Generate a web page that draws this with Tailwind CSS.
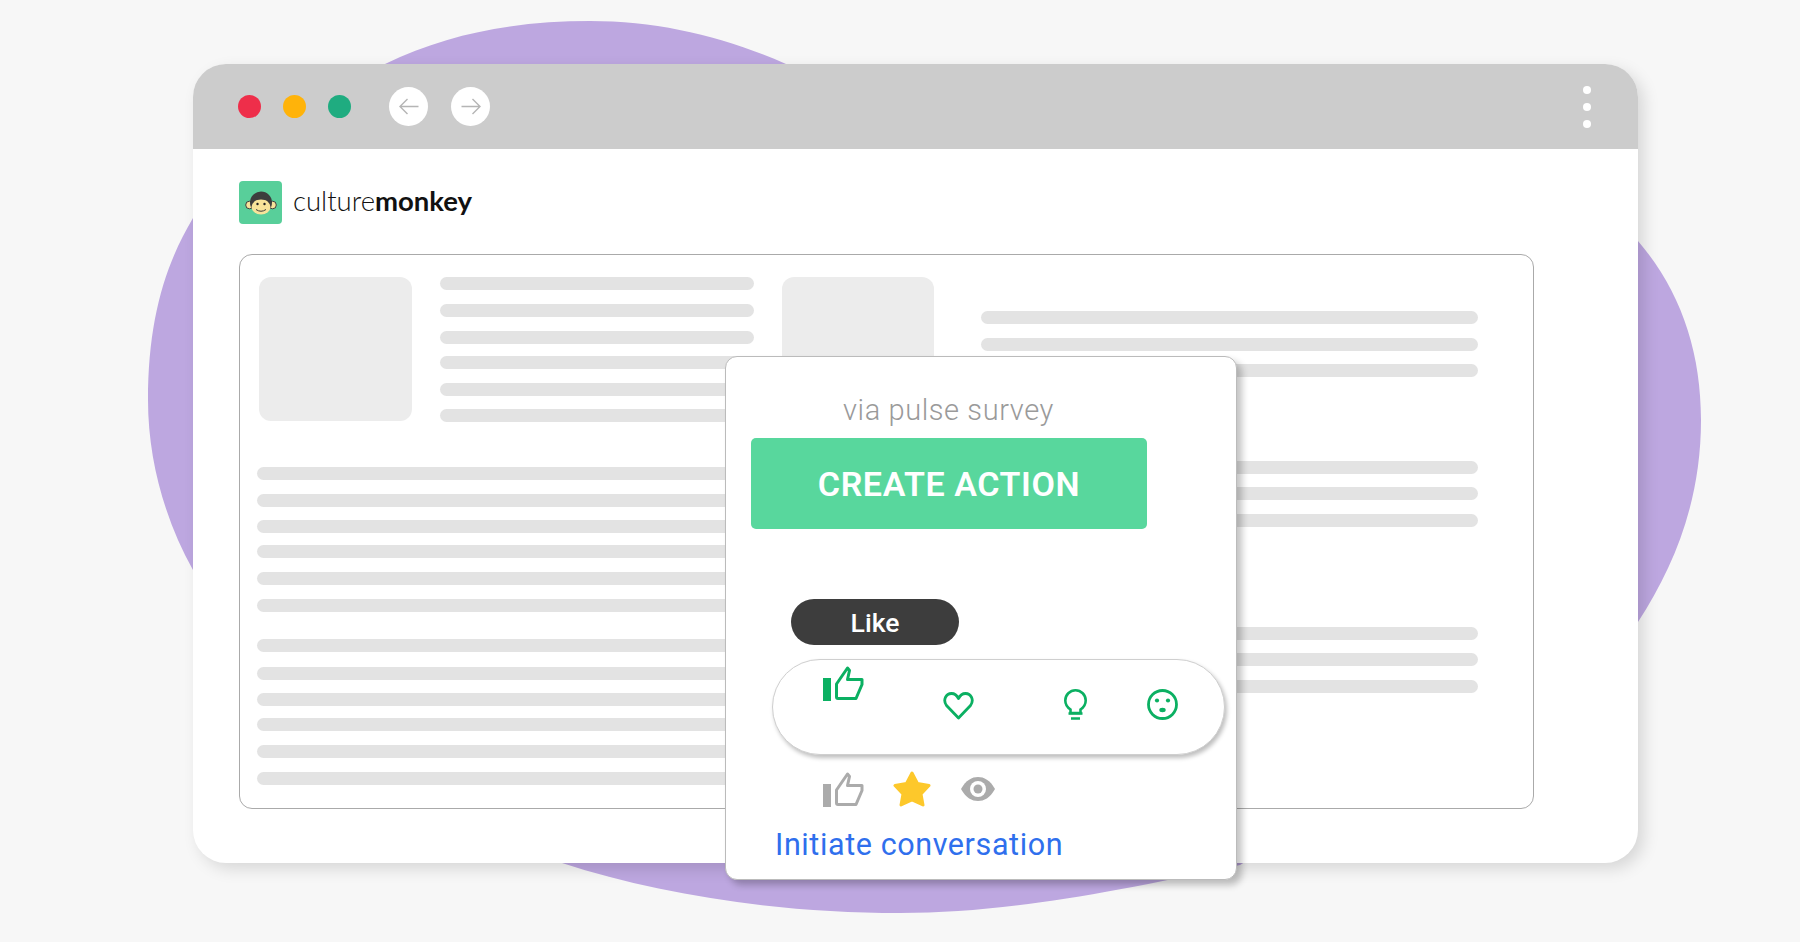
<!DOCTYPE html>
<html lang="en">
<head>
    <meta charset="UTF-8">
    <meta name="viewport" content="width=device-width, initial-scale=1.0">
    <title>CultureMonkey</title>
    <script src="https://cdn.jsdelivr.net/npm/@tailwindcss/browser@4"></script>
</head>
<body class="bg-[#f7f7f7] overflow-hidden">
    <div class="relative w-[1800px] h-[942px] pl-[193px] pt-[64px]">
        <!-- purple blob behind the window -->
        <svg class="absolute left-0 top-0" width="1800" height="942" viewBox="0 0 1800 942">
            <path fill="#bda7e0" d="M148 400 C148 320 165 265 193 218 C240 140 310 100 385 64 C450 32 520 21 590 21 C660 21 725 37 786 64 L1638 241 C1680 290 1701 350 1701 420 C1701 500 1675 565 1638 622 L1240 865 C1100 895 1000 913 900 913 C780 913 660 895 562 863 L193 570 C165 520 148 460 148 400 Z"/>
        </svg>

        <!-- browser window -->
        <div class="relative w-[1445px] h-[799px] bg-white rounded-[33px] shadow-[6px_6px_16px_rgba(0,0,0,0.13)]">
            <div class="h-[85px] bg-[#cccccc] rounded-t-[33px] flex items-center pl-[45px] pr-[47px]">
                <span class="w-[23px] h-[23px] rounded-full bg-[#ee2e4a]"></span>
                <span class="w-[23px] h-[23px] rounded-full bg-[#ffb30a] ml-[22px]"></span>
                <span class="w-[23px] h-[23px] rounded-full bg-[#1fac80] ml-[22px]"></span>
                <span class="w-[39px] h-[39px] rounded-full bg-white ml-[38px] flex items-center justify-center">
                    <svg width="20" height="17" viewBox="0 0 20 17" fill="none" stroke="#b5b5b5" stroke-width="1.4"><path d="M19.5 8.5 H1 M8.5 1 L1 8.5 L8.5 16"/></svg>
                </span>
                <span class="w-[39px] h-[39px] rounded-full bg-white ml-[23px] flex items-center justify-center">
                    <svg width="20" height="17" viewBox="0 0 20 17" fill="none" stroke="#b5b5b5" stroke-width="1.4"><path d="M0.5 8.5 H19 M11.5 1 L19 8.5 L11.5 16"/></svg>
                </span>
                <div class="ml-auto flex flex-col gap-[9px]">
                    <span class="w-[8px] h-[8px] rounded-full bg-white"></span>
                    <span class="w-[8px] h-[8px] rounded-full bg-white"></span>
                    <span class="w-[8px] h-[8px] rounded-full bg-white"></span>
                </div>
            </div>

            <div class="pl-[46px]">
                <!-- logo -->
                <div class="flex items-center h-[43px] mt-[32px]">
                    <div class="w-[43px] h-[43px] rounded-[4px] bg-[#58cf9a] flex items-center justify-center">
                        <svg width="32" height="24" viewBox="0 0 32 24">
                            <circle cx="4.5" cy="14" r="3.8" fill="#f7e39a" stroke="#3d3d3d" stroke-width="1"/>
                            <circle cx="27.5" cy="14" r="3.8" fill="#f7e39a" stroke="#3d3d3d" stroke-width="1"/>
                            <ellipse cx="16" cy="11.5" rx="11" ry="11" fill="#3d3d3d"/>
                            <ellipse cx="16" cy="16" rx="9.5" ry="7.5" fill="#f7e39a"/>
                            <circle cx="12.5" cy="12.5" r="3.3" fill="#f7e39a"/>
                            <circle cx="19.5" cy="12.5" r="3.3" fill="#f7e39a"/>
                            <circle cx="12.5" cy="13" r="1.2" fill="#222"/>
                            <circle cx="19.5" cy="13" r="1.2" fill="#222"/>
                            <path d="M11 18.5 Q16 22 21 18.5" fill="none" stroke="#3d3d3d" stroke-width="1"/>
                        </svg>
                    </div>
                    <span class="ml-[11px] mb-[4px] text-[27.5px] leading-none text-[#111] font-['Lato',sans-serif] font-light">culture<span class="font-bold">monkey</span></span>
                </div>

                <!-- content card -->
                <div class="flex w-[1295px] h-[555px] mt-[30px] border border-[#aaaaaa] rounded-[13px] pl-[17px] pt-[22px]">
                    <div class="w-[497px]">
                        <div class="flex pl-[2px]">
                            <div class="w-[153px] h-[144px] rounded-[12px] bg-[#ececec]"></div>
                            <div class="ml-[28px]">
                                <div class="w-[314px] h-[13px] rounded-full bg-[#e3e3e3]"></div>
                                <div class="w-[314px] h-[13px] rounded-full bg-[#e3e3e3] mt-[14px]"></div>
                                <div class="w-[314px] h-[13px] rounded-full bg-[#e3e3e3] mt-[14px]"></div>
                                <div class="w-[314px] h-[13px] rounded-full bg-[#e3e3e3] mt-[12px]"></div>
                                <div class="w-[314px] h-[13px] rounded-full bg-[#e3e3e3] mt-[14px]"></div>
                                <div class="w-[314px] h-[13px] rounded-full bg-[#e3e3e3] mt-[13px]"></div>
                            </div>
                        </div>
                        <div class="w-[480px] h-[13px] rounded-full bg-[#e3e3e3] mt-[45px]"></div>
                        <div class="w-[480px] h-[13px] rounded-full bg-[#e3e3e3] mt-[14px]"></div>
                        <div class="w-[480px] h-[13px] rounded-full bg-[#e3e3e3] mt-[13px]"></div>
                        <div class="w-[480px] h-[13px] rounded-full bg-[#e3e3e3] mt-[12px]"></div>
                        <div class="w-[480px] h-[13px] rounded-full bg-[#e3e3e3] mt-[14px]"></div>
                        <div class="w-[480px] h-[13px] rounded-full bg-[#e3e3e3] mt-[14px]"></div>
                        <div class="w-[480px] h-[13px] rounded-full bg-[#e3e3e3] mt-[27px]"></div>
                        <div class="w-[480px] h-[13px] rounded-full bg-[#e3e3e3] mt-[15px]"></div>
                        <div class="w-[480px] h-[13px] rounded-full bg-[#e3e3e3] mt-[13px]"></div>
                        <div class="w-[480px] h-[13px] rounded-full bg-[#e3e3e3] mt-[12px]"></div>
                        <div class="w-[480px] h-[13px] rounded-full bg-[#e3e3e3] mt-[14px]"></div>
                        <div class="w-[480px] h-[13px] rounded-full bg-[#e3e3e3] mt-[14px]"></div>
                    </div>
                    <div class="w-[152px] h-[144px] rounded-[12px] bg-[#ececec] ml-[28px]"></div>
                    <div class="ml-[47px] pt-[34px]">
                        <div class="w-[497px] h-[13px] rounded-full bg-[#e3e3e3]"></div>
                        <div class="w-[497px] h-[13px] rounded-full bg-[#e3e3e3] mt-[14px]"></div>
                        <div class="w-[497px] h-[13px] rounded-full bg-[#e3e3e3] mt-[13px]"></div>
                        <div class="w-[497px] h-[13px] rounded-full bg-[#e3e3e3] mt-[84px]"></div>
                        <div class="w-[497px] h-[13px] rounded-full bg-[#e3e3e3] mt-[13px]"></div>
                        <div class="w-[497px] h-[13px] rounded-full bg-[#e3e3e3] mt-[14px]"></div>
                        <div class="w-[497px] h-[13px] rounded-full bg-[#e3e3e3] mt-[100px]"></div>
                        <div class="w-[497px] h-[13px] rounded-full bg-[#e3e3e3] mt-[13px]"></div>
                        <div class="w-[497px] h-[13px] rounded-full bg-[#e3e3e3] mt-[14px]"></div>
                    </div>
                </div>
            </div>
        </div>

        <!-- action popup, lies over the window -->
        <div class="absolute left-[725px] top-[356px] w-[512px] h-[524px] bg-white border border-[#bbbbbb] rounded-[12px] shadow-[5px_5px_7px_rgba(0,0,0,0.24)] font-['Roboto',sans-serif]">
            <p class="ml-[117px] mt-[34px] h-[38px] leading-[38px] text-[29px] font-light tracking-[0.6px] text-[#9a9a9a] whitespace-nowrap">via pulse survey</p>
            <div class="ml-[25px] mt-[9px] w-[396px] h-[91px] rounded-[5px] bg-[#58d79d] flex items-center justify-center pt-[2px] text-white text-[34px] font-semibold tracking-[0.6px]">CREATE ACTION</div>
            <div class="ml-[65px] mt-[70px] w-[168px] h-[46px] rounded-full bg-[#3d3d3d] flex items-center justify-center pt-[2px] text-white text-[26.5px] font-medium">Like</div>
            <div class="ml-[46px] mt-[14px] w-[453px] h-[96px] rounded-full bg-white border border-[#cfcfcf] shadow-[2px_3px_4px_rgba(0,0,0,0.25)] flex items-start pl-[50px]">
                <svg class="mt-[5px]" width="41" height="36" viewBox="0 0 41 36" fill="none" stroke="#0bb062" stroke-width="3" stroke-linejoin="round">
                    <rect x="0" y="13" width="8" height="23" fill="#0bb062" stroke="none"/>
                    <path d="M13.5 19 L24.5 3 L26.5 5.5 L24.5 14.5 H39 V19.5 L33 33.5 H15 Q13.5 33.5 13.5 32 Z"/>
                </svg>
                <svg class="mt-[32px] ml-[79px]" width="31" height="28" viewBox="0 0 31 28" fill="none" stroke="#0bb062" stroke-width="2.8" stroke-linejoin="round">
                    <path d="M15.5 26 L3.5 13.5 C-0.5 8 3 1.5 8.5 1.5 C11.5 1.5 14 3.5 15.5 6.5 C17 3.5 19.5 1.5 22.5 1.5 C28 1.5 31.5 8 27.5 13.5 Z"/>
                </svg>
                <svg class="mt-[29px] ml-[90px]" width="23" height="31" viewBox="0 0 23 31" fill="none" stroke="#0bb062" stroke-width="2.6">
                    <path d="M6.5 24 V20.5 C3.5 18.5 1.3 15.5 1.3 11.5 A10.2 10.2 0 0 1 21.7 11.5 C21.7 15.5 19.5 18.5 16.5 20.5 V24 Z"/>
                    <path d="M4.5 24.5 H18.5 M7 29.5 H16"/>
                </svg>
                <svg class="mt-[29px] ml-[60px]" width="31" height="31" viewBox="0 0 31 31" fill="none">
                    <circle cx="15.5" cy="15.5" r="14" stroke="#0bb062" stroke-width="2.8"/>
                    <circle cx="10" cy="11.5" r="2.1" fill="#0bb062"/>
                    <circle cx="21" cy="11.5" r="2.1" fill="#0bb062"/>
                    <ellipse cx="15.5" cy="21" rx="3.2" ry="2.2" fill="#0bb062"/>
                </svg>
            </div>
            <div class="flex items-start ml-[97px] mt-[16px] h-[37px]">
                <svg width="41" height="36" viewBox="0 0 41 36" fill="none" stroke="#ababab" stroke-width="3" stroke-linejoin="round">
                    <rect x="0" y="13" width="8" height="23" fill="#ababab" stroke="none"/>
                    <path d="M13.5 19 L24.5 3 L26.5 5.5 L24.5 14.5 H39 V19.5 L33 33.5 H15 Q13.5 33.5 13.5 32 Z"/>
                </svg>
                <svg class="ml-[29px]" width="38" height="36" viewBox="0 0 38 36" fill="#fdc82b" stroke="#fdc82b" stroke-width="3" stroke-linejoin="round">
                    <path d="M19 2 L24.5 12.5 L36 14.5 L28 23 L30 34 L19 29 L8 34 L10 23 L2 14.5 L13.5 12.5 Z"/>
                </svg>
                <svg class="ml-[30px] mt-[6px]" width="34" height="24" viewBox="0 0 34 24">
                    <path fill="#ababab" d="M0 12 C5 3 11 0 17 0 C23 0 29 3 34 12 C29 21 23 24 17 24 C11 24 5 21 0 12 Z"/>
                    <circle cx="17" cy="12" r="8" fill="#fff"/>
                    <circle cx="17" cy="12" r="4.5" fill="#ababab"/>
                </svg>
            </div>
            <p class="ml-[49px] mt-[17px] h-[40px] leading-[40px] text-[30.5px] font-normal tracking-[0.6px] text-[#2f6fed] whitespace-nowrap">Initiate conversation</p>
        </div>
    </div>
</body>
</html>
